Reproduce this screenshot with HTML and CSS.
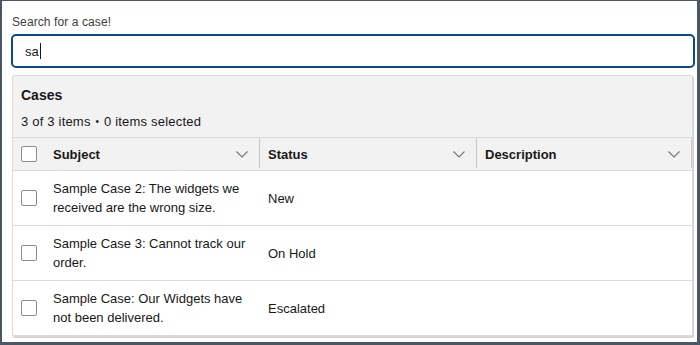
FILE: index.html
```html
<!DOCTYPE html>
<html>
<head>
<meta charset="utf-8">
<link rel="stylesheet" href="styles.css">
</head>
<body>
<div class="frame">
  <div class="search">
    <label class="search-label">Search for a case!</label>
    <div class="search-input" role="textbox">sa<span class="caret"></span></div>
  </div>
  <div class="card">
    <div class="card-head">
      <div class="card-title">Cases</div>
      <div class="card-meta">3 of 3 items <span class="dot">•</span> 0 items selected</div>
    </div>
    <div class="table">
      <div class="th th-first">
        <span class="cb"></span>
        <span class="th-label">Subject</span>
        <svg class="chev" viewBox="0 0 12 7" width="12" height="7"><path d="M0.5 0.5 L6 6 L11.5 0.5" fill="none" stroke="#76746f" stroke-width="1.1"/></svg>
      </div>
      <div class="th">
        <span class="th-label">Status</span>
        <svg class="chev" viewBox="0 0 12 7" width="12" height="7"><path d="M0.5 0.5 L6 6 L11.5 0.5" fill="none" stroke="#76746f" stroke-width="1.1"/></svg>
      </div>
      <div class="th">
        <span class="th-label">Description</span>
        <svg class="chev" viewBox="0 0 12 7" width="12" height="7"><path d="M0.5 0.5 L6 6 L11.5 0.5" fill="none" stroke="#76746f" stroke-width="1.1"/></svg>
      </div>

      <div class="td td-first"><span class="cb"></span><span class="subj">Sample Case 2: The widgets we received are the wrong size.</span></div>
      <div class="td">New</div>
      <div class="td"></div>

      <div class="td td-first"><span class="cb"></span><span class="subj">Sample Case 3: Cannot track our order.</span></div>
      <div class="td">On Hold</div>
      <div class="td"></div>

      <div class="td td-first"><span class="cb"></span><span class="subj">Sample Case: Our Widgets have not been delivered.</span></div>
      <div class="td">Escalated</div>
      <div class="td"></div>
    </div>
  </div>
</div>
</body>
</html>
```

FILE: styles.css
```css
* { box-sizing: border-box; }
html, body { margin: 0; padding: 0; }
body {
  font-family: "Liberation Sans", Arial, sans-serif;
  color: #181818;
  background: #fff;
}
.frame {
  width: 700px;
  height: 345px;
  border-style: solid;
  border-color: #4b5763;
  border-width: 1px 3px 3px 2px;
  background: #fff;
  padding: 13px 2px 0 9px;
  overflow: hidden;
}
.search { display: flex; flex-direction: column; }
.search-label {
  font-size: 12px;
  line-height: 16px;
  color: #3e3e3c;
  margin-left: 1px;
  margin-bottom: 4px;
  letter-spacing: 0.1px;
}
.search-input {
  height: 34px;
  border: 2px solid #0b4a8b;
  border-radius: 5px;
  padding: 0 12px;
  font-size: 13px;
  display: flex;
  align-items: center;
  color: #181818;
}
.caret {
  display: inline-block;
  width: 1px;
  height: 16px;
  background: #181818;
  margin-left: 1px;
}
.card {
  margin: 7px 2px 0 1px;
  border: 1px solid #dddbda;
  background: #f3f2f2;
  border-radius: 2px;
  box-shadow: 1px 1px 0 #d0d0d0;
}
.card-head { padding: 9px 8px 6px 8px; }
.card-title {
  font-size: 14px;
  font-weight: bold;
  line-height: 20px;
}
.card-meta {
  font-size: 13px;
  line-height: 18px;
  margin-top: 8px;
  color: #181818;
  letter-spacing: 0.2px;
}
.dot { font-size: 10px; margin: 0 1px; vertical-align: 1px; }
.table {
  display: grid;
  grid-template-columns: 247px 217px 215px;
}
.th {
  height: 34px;
  border-top: 1px solid #dddbda;
  border-bottom: 1px solid #dddbda;
  display: flex;
  align-items: center;
  padding: 0 12px 0 8px;
  font-size: 13px;
  font-weight: bold;
  position: relative;
}
.th::after {
  content: "";
  position: absolute;
  right: 0;
  top: 0;
  bottom: 2px;
  width: 1px;
  background: #c9c7c5;
}
.th-label { flex: 1; }
.th-first .th-label { margin-left: 16px; }
.chev { flex: none; }
.cb {
  flex: none;
  width: 16px;
  height: 16px;
  border: 1px solid #8e8c8a;
  border-radius: 2px;
  background: #fff;
}
.td {
  height: 55px;
  background: #fff;
  border-bottom: 1px solid #dddbda;
  display: flex;
  align-items: center;
  padding: 0 8px;
  font-size: 13px;
  line-height: 19px;
}
.td-first .subj { margin-left: 16px; }
```
